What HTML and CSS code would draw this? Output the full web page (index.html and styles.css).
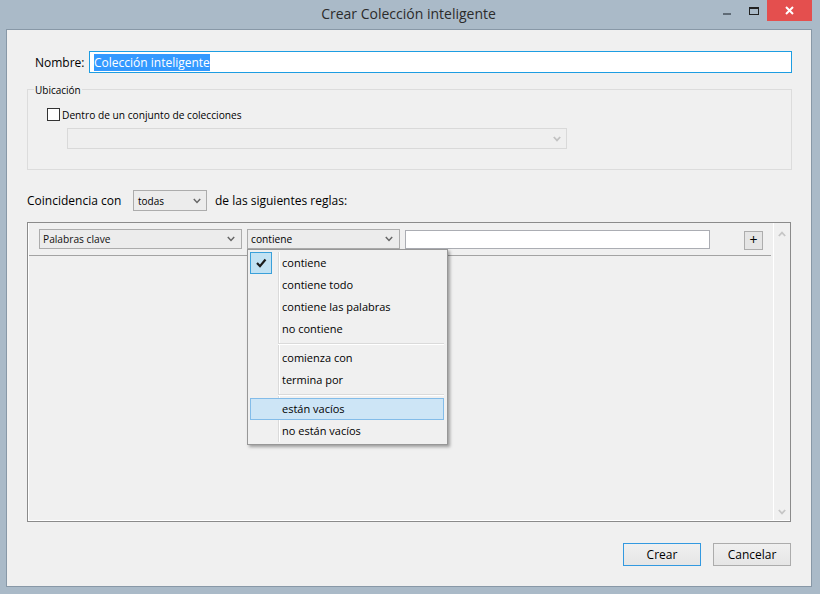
FILE: index.html
```html
<!DOCTYPE html>
<html lang="es">
<head>
<meta charset="utf-8">
<title>Crear Colección inteligente</title>
<link rel="stylesheet" href="styles.css">
</head>
<body>

<div class="titlebar">
    <span></span>
    <span class="title">Crear Colección inteligente</span>
    <div class="controls">
        <span class="ctl"><svg width="26" height="21"><rect x="8" y="13" width="8" height="2" fill="#5f6b76"/></svg></span>
        <span class="ctl"><svg width="26" height="21"><rect x="8.5" y="7.5" width="9" height="7" fill="none" stroke="#222" stroke-width="1"/><rect x="8" y="7" width="10" height="2" fill="#222"/></svg></span>
        <span class="ctl close"><svg width="45" height="21"><path d="M19 7 L26 14 M26 7 L19 14" stroke="#fff" stroke-width="2"/></svg></span>
    </div>
</div>

<div class="client">
    <div class="name-row">
        <label class="name-label">Nombre:</label>
        <div class="name-input"><span class="sel">Colección inteligente</span></div>
    </div>

    <div class="group">
        <span class="group-title">Ubicación</span>
        <label class="check"><span class="box"></span>Dentro de un conjunto de colecciones</label>
        <div class="select disabled">
            <span></span>
            <svg class="arrow" width="8" height="6"><path d="M0.8 1 L4 4.4 L7.2 1" fill="none" stroke="#c2c2c2" stroke-width="1.8"/></svg>
        </div>
    </div>

    <div class="match-row">
        <span class="match-label">Coincidencia con</span>
        <div class="select todas">
            <span>todas</span>
            <svg class="arrow" width="8" height="6"><path d="M0.8 1 L4 4.4 L7.2 1" fill="none" stroke="#666" stroke-width="1.5"/></svg>
        </div>
        <span class="match-after">de las siguientes reglas:</span>
    </div>

    <div class="rules">
        <div class="rules-body">
            <div class="rule">
                <div class="select crit">
                    <span>Palabras clave</span>
                    <svg class="arrow" width="8" height="6"><path d="M0.8 1 L4 4.4 L7.2 1" fill="none" stroke="#666" stroke-width="1.5"/></svg>
                </div>
                <div class="select op">
                    <span>contiene</span>
                    <svg class="arrow" width="8" height="6"><path d="M0.8 1 L4 4.4 L7.2 1" fill="none" stroke="#666" stroke-width="1.5"/></svg>
                    <ul class="menu">
                        <li><span class="mark on"><svg width="22" height="22"><path d="M7 11 L10 14.2 L15.5 7.5" fill="none" stroke="#1c1c1c" stroke-width="2.2"/></svg></span>contiene</li>
                        <li><span class="mark"></span>contiene todo</li>
                        <li><span class="mark"></span>contiene las palabras</li>
                        <li><span class="mark"></span>no contiene</li>
                        <li class="sep"></li>
                        <li><span class="mark"></span>comienza con</li>
                        <li><span class="mark"></span>termina por</li>
                        <li class="sep"></li>
                        <li class="hover"><span class="mark"></span>están vacíos</li>
                        <li><span class="mark"></span>no están vacíos</li>
                    </ul>
                </div>
                <div class="value"></div>
                <div class="add">+</div>
            </div>
            <div class="rule-line"></div>
        </div>
        <div class="scroll">
            <svg width="8" height="6"><path d="M0.8 5 L4 1.6 L7.2 5" fill="none" stroke="#c6c6c6" stroke-width="1.8"/></svg>
            <svg width="8" height="6"><path d="M0.8 1 L4 4.4 L7.2 1" fill="none" stroke="#c6c6c6" stroke-width="1.8"/></svg>
        </div>
    </div>

    <div class="buttons">
        <button type="button" class="default">Crear</button>
        <button type="button">Cancelar</button>
    </div>
</div>

</body>
</html>
```

FILE: styles.css
```css
* { box-sizing: border-box; }
body { margin: 0; width: 820px; height: 594px; overflow: hidden; background: #aabac8; font-family: "Open Sans", "Noto Sans", sans-serif; color: #000; }

.titlebar { display: grid; grid-template-columns: 1fr auto 1fr; height: 29px; }
.title { font-size: 14px; line-height: 28px; color: #2b2b2b; padding-right: 3px; }
.controls { justify-self: end; display: flex; margin-right: 8px; height: 21px; }
.ctl { display: block; width: 26px; height: 21px; }
.ctl svg { display: block; }
.ctl.close { width: 45px; background: #e44f4e; }

.client { margin-left: 6px; width: 806px; height: 558px; border: 1px solid #8898a7; background: #f0f0f0; padding: 21px 19px 0 20px; }

.name-row { display: flex; align-items: center; height: 22px; }
.name-label { width: 62px; padding-left: 8px; font-size: 12px; }
.name-input { flex: 1; height: 22px; border: 1px solid #1d9de2; background: #fff; padding-left: 4px; display: flex; align-items: center; font-size: 12px; }
.name-input .sel { background: #3399ff; color: #fff; line-height: 17px; }

.group { margin-top: 16px; border: 1px solid #dcdcdc; padding: 0 19px 20px 19px; }
.group-title { display: block; width: fit-content; margin: -7px 0 0 -13px; padding: 0 1px; background: #f0f0f0; font-size: 10px; line-height: 14px; }
.check { display: flex; align-items: center; gap: 2px; height: 15px; margin-top: 10px; font-size: 10.2px; }
.check .box { width: 13px; height: 13px; border: 1px solid #333; background: #fff; }

.select { display: flex; align-items: center; justify-content: space-between; border: 1px solid #acacac; background: #ececec; padding: 0 6px 0 3px; position: relative; }
.select .arrow { display: block; }
.select.disabled { width: 500px; height: 21px; margin: 6px 0 0 20px; border-color: #d9d9d9; background: #efefef; padding-right: 5px; }

.match-row { display: flex; align-items: center; height: 21px; margin-top: 20px; font-size: 12px; }
.match-label { width: 106px; }
.select.todas { width: 74px; height: 21px; font-size: 10px; padding: 0 5px 0 4px; }
.match-after { margin-left: 8px; }

.rules { display: flex; width: 764px; height: 300px; margin-top: 11px; border: 1px solid #8b8b8b; box-shadow: inset 1px -1px 0 #fff; }
.rules-body { flex: 1; }
.rule { display: flex; align-items: flex-start; padding: 6px 0 0 11px; }
.select.crit { width: 203px; height: 20px; font-size: 10.2px; color: #111; }
.select.op { width: 153px; height: 20px; margin-left: 5px; font-size: 10.2px; }
.value { width: 305px; height: 19px; margin: 1px 0 0 5px; border: 1px solid #abadb3; background: #fff; }
.add { width: 19px; height: 19px; margin: 2px 0 0 34px; border: 1px solid #adadad; background: #e5e5e5; font-size: 14px; line-height: 15px; text-align: center; }
.rule-line { margin: 5px 2px 0 1px; border-top: 1px solid #a3a3a3; }
.scroll { width: 17px; border-left: 1px solid #fff; display: flex; flex-direction: column; justify-content: space-between; align-items: center; padding: 8px 0 6px; }
.scroll svg { display: block; }

.menu { position: absolute; left: -1px; top: 19px; width: 201px; margin: 0; padding: 2px 0; list-style: none; border: 1px solid #979797; background: #f0f0f0; box-shadow: 2px 2px 3px rgba(0, 0, 0, 0.35); font-size: 11px; z-index: 2; }
.menu::before { content: ""; position: absolute; left: 30px; top: 2px; bottom: 2px; width: 1px; background: #dadada; border-right: 1px solid #fff; box-sizing: content-box; }
.menu li { display: flex; align-items: center; width: 194px; height: 22px; margin-left: 2px; padding-bottom: 2px; border: 1px solid transparent; position: relative; }
.menu li.sep { height: 2px; margin: 3px 0 2px 30px; width: 166px; padding: 0; border: none; border-top: 1px solid #dadada; border-bottom: 1px solid #fff; }
.menu li.hover { background: #cde5f6; border-color: #83bce9; }
.mark { width: 22px; height: 22px; margin: 0 10px -1px -1px; flex: none; align-self: flex-start; margin-top: -1px; }
.mark svg { display: block; }
.mark.on { background: #c2e2f3; border: 1px solid #3aa0da; }
.mark.on svg { margin: -1px; }

.buttons { display: flex; justify-content: flex-end; gap: 12px; margin-top: 21px; padding-right: 1px; }
button { width: 78px; height: 23px; border: 1px solid #acacac; background: linear-gradient(#f0f0f0, #e5e5e5); font-family: inherit; font-size: 12px; color: #000; padding: 0; }
button.default { border-color: #3399e0; }
```
